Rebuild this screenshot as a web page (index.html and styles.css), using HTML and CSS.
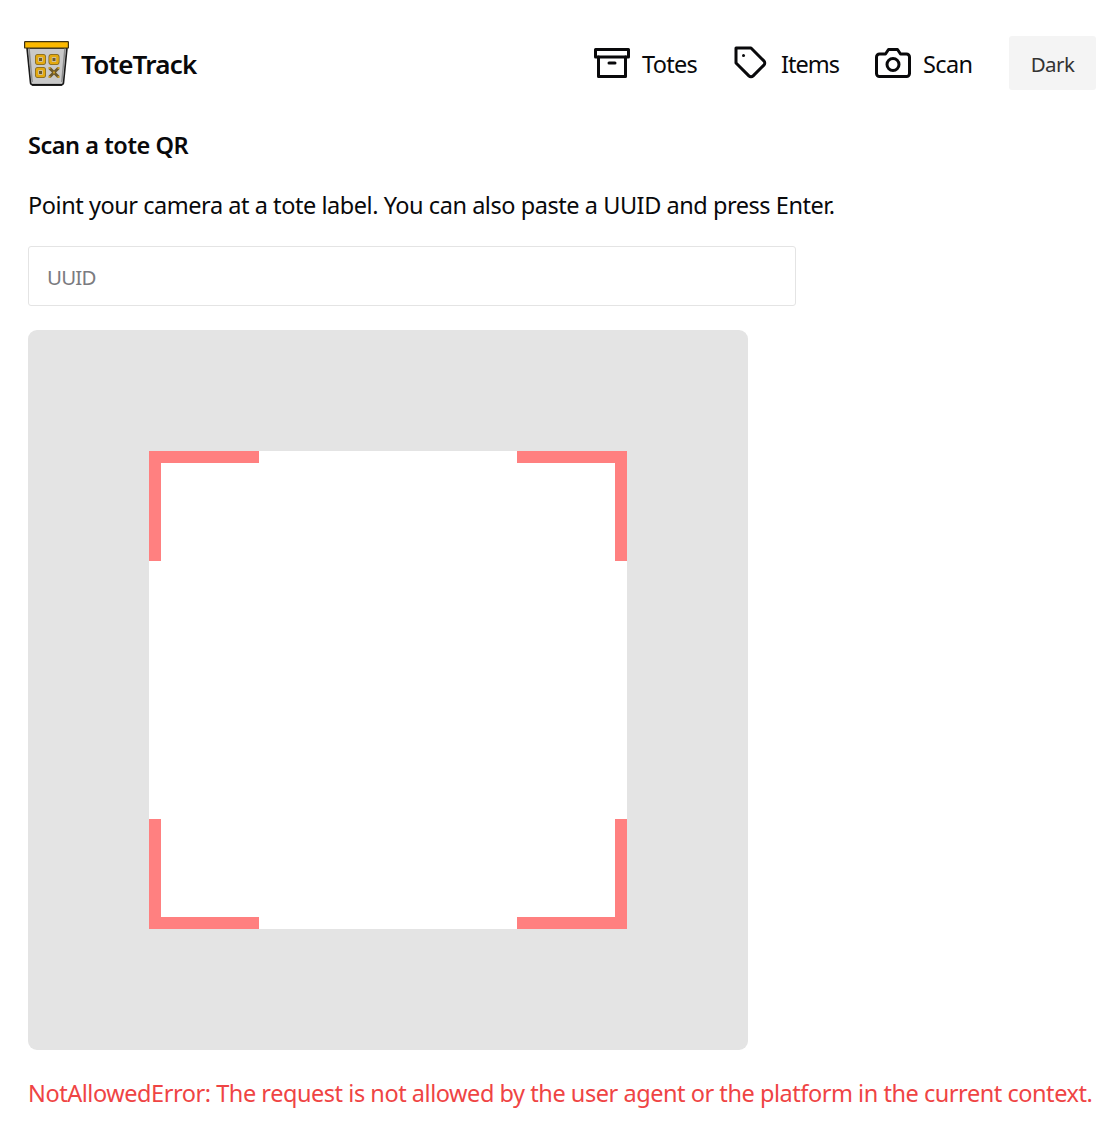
FILE: index.html
```html
<!DOCTYPE html>
<html lang="en">
<head>
<meta charset="utf-8">
<title>ToteTrack</title>
<link rel="stylesheet" href="styles.css">
</head>
<body>
<header class="topbar">
  <a class="brand">
    <svg class="logo" viewBox="0 0 46 46">
      <path d="M3 8h40l-3.400 34a3 3 0 0 1-3 3H9.400a3 3 0 0 1-3-3z" fill="#c9c9c9" stroke="#1a1a1a" stroke-width="1.600"/>
      <path d="M5 8l3.200 34M41 8l-3.200 34" stroke="#8c8c8c" stroke-width="1.500"/>
      <path d="M8 44.800h30" stroke="#111" stroke-width="1.800"/>
      <rect x=".6" y="1.600" width="43.800" height="6.400" rx=".6" fill="#fcb900" stroke="#3d3213" stroke-width="1.200"/>
      <g fill="#c9c9c9" stroke="#79601f" stroke-width="4"><rect x="13" y="16" width="7" height="7" rx="1"/><rect x="26.500" y="16" width="7" height="7" rx="1"/><rect x="13" y="29" width="7" height="7" rx="1"/></g>
      <g fill="#c9c9c9" stroke="#e3a910" stroke-width="2.600"><rect x="13" y="16" width="7" height="7" rx="1"/><rect x="26.500" y="16" width="7" height="7" rx="1"/><rect x="13" y="29" width="7" height="7" rx="1"/></g>
      <g fill="#6d5a2b"><rect x="15" y="18" width="3" height="3"/><rect x="28.500" y="18" width="3" height="3"/><rect x="15" y="31" width="3" height="3"/></g>
      <path d="M25.500 28l9 9m0-9l-9 9" stroke="#6d5a2b" stroke-width="3"/>
      <path d="M24.500 28h2m9 0h-2m-9 9h2m9 0h-2m-4.500-4.500h2" stroke="#c99a26" stroke-width="2"/>
    </svg>
    <span class="brand-name">ToteTrack</span>
  </a>
  <nav class="nav">
    <a class="link"><svg class="icon" viewBox="0 0 24 24"><path d="M21 8v13H3V8"/><rect x="1" y="3" width="22" height="5"/><path d="M10 12h4"/></svg><span class="label totes">Totes</span></a>
    <a class="link"><svg class="icon" viewBox="0 0 24 24"><path d="M20.590 13.410l-7.170 7.170a2 2 0 0 1-2.830 0L2 12V2h10l8.590 8.590a2 2 0 0 1 0 2.820z"/><path d="M7 7h.01"/></svg><span class="label items">Items</span></a>
    <a class="link"><svg class="icon" viewBox="0 0 24 24"><path d="M23 19a2 2 0 0 1-2 2H3a2 2 0 0 1-2-2V8a2 2 0 0 1 2-2h4l2-3h6l2 3h4a2 2 0 0 1 2 2z"/><circle cx="12" cy="13" r="4"/></svg><span class="label scan">Scan</span></a>
    <button class="theme">Dark</button>
  </nav>
</header>
<main class="page">
  <h1 class="title">Scan a tote QR</h1>
  <p class="hint">Point your camera at a tote label. You can also paste a UUID and press Enter.</p>
  <input class="uuid" placeholder="UUID">
  <div class="viewer">
    <div class="frame">
      <i class="corner tl"></i><i class="corner tr"></i><i class="corner bl"></i><i class="corner br"></i>
    </div>
  </div>
  <p class="error">NotAllowedError: The request is not allowed by the user agent or the platform in the current context.</p>
</main>
</body>
</html>
```
FILE: styles.css
```css
* { box-sizing: border-box; }
body {
  margin: 0;
  background: #fff;
  color: #09090b;
  font: 23.5px/36px "Noto Sans", "Open Sans", sans-serif;
  white-space: nowrap;
}
.topbar {
  display: flex;
  justify-content: space-between;
  align-items: center;
  height: 126px;
  padding: 0 24px;
}
.brand, .nav, .link { display: flex; align-items: center; }
.brand { gap: 11px; }
.logo { width: 46px; height: 46px; }
.brand-name { padding-top: 2px; font-size: 26px; font-weight: 600; letter-spacing: -0.8px; }
.nav { gap: 36px; }
.link { gap: 12px; }
.icon {
  width: 36px;
  height: 36px;
  fill: none;
  stroke: currentColor;
  stroke-width: 2;
  stroke-linecap: round;
  stroke-linejoin: round;
}
.label { padding-top: 2px; }
.totes { width: 55px; letter-spacing: -0.7px; }
.items { width: 58px; letter-spacing: -1px; }
.scan { width: 50px; letter-spacing: -0.6px; }
.theme {
  width: 87px;
  height: 54px;
  border: 0;
  border-radius: 3px;
  padding: 2px 0 0;
  background: #f4f4f4;
  color: #333;
  font: 20.5px/30px "Noto Sans", sans-serif;
  letter-spacing: -0.6px;
}
.page { padding: 1px 28px 0; }
.title, .hint, .error { margin: 0; }
.title { font-size: 23.5px; line-height: 36px; font-weight: 600; letter-spacing: -0.45px; }
.hint { margin-top: 24px; letter-spacing: -0.45px; }
.uuid {
  display: block;
  width: 768px;
  height: 60px;
  margin-top: 23px;
  padding: 2px 18px 0;
  border: 1px solid #e4e4e4;
  border-radius: 3px;
  font: 20.5px/30px "Noto Sans", sans-serif;
  letter-spacing: -0.8px;
}
.uuid::placeholder { color: #7b7b80; }
.viewer {
  width: 720px;
  height: 720px;
  margin-top: 24px;
  padding: 121px;
  border-radius: 9px;
  background: #e4e4e4;
}
.frame {
  display: grid;
  grid-template-columns: 110px 110px;
  grid-template-rows: 110px 110px;
  place-content: space-between;
  height: 478px;
  background: #fff;
}
.corner { border: 0 solid #ff8080; }
.tl { border-width: 12px 0 0 12px; }
.tr { border-width: 12px 12px 0 0; }
.bl { border-width: 0 0 12px 12px; }
.br { border-width: 0 12px 12px 0; }
.error { margin-top: 25px; color: #ef4444; letter-spacing: -0.455px; }
```
